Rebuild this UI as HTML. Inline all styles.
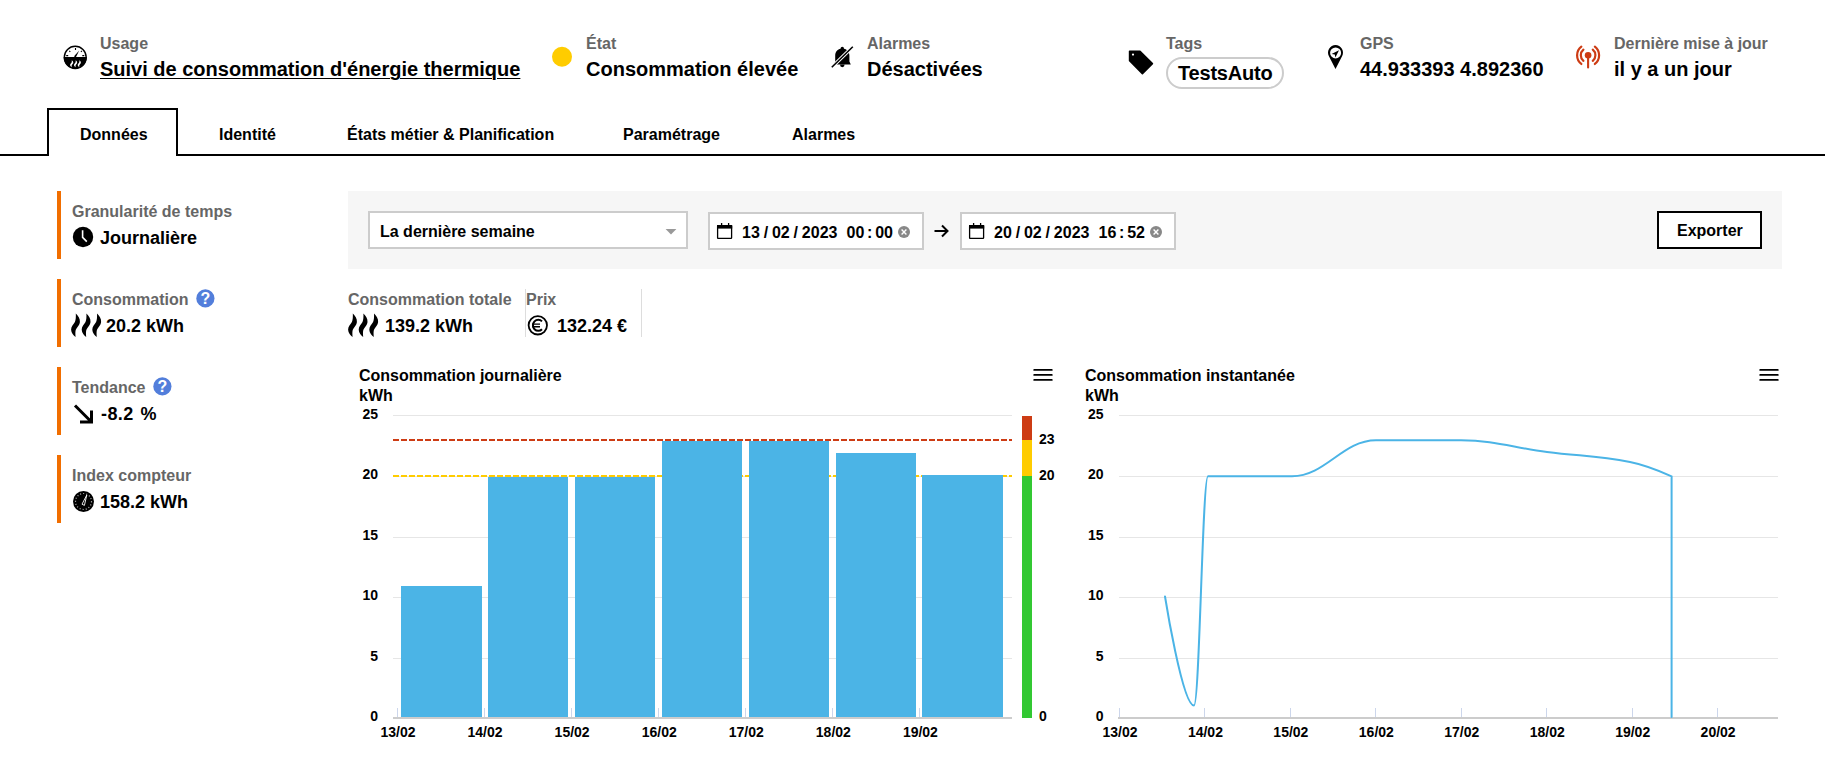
<!DOCTYPE html>
<html><head><meta charset="utf-8"><style>
html,body{margin:0;padding:0;background:#fff;width:1825px;height:768px;overflow:hidden;position:relative}
body{font-family:"Liberation Sans",sans-serif}
.t{position:absolute;white-space:nowrap;font-family:"Liberation Sans",sans-serif}
svg{overflow:visible}
</style></head><body>
<div class="t" style="left:100px;top:35.66px;font-size:16px;line-height:16px;color:#666;font-weight:700;">Usage</div>
<div class="t" style="left:100px;top:59.07px;font-size:20px;line-height:20px;color:#000;font-weight:700;text-decoration:underline;text-underline-offset:2px;text-decoration-thickness:1px;">Suivi de consommation d'énergie thermique</div>
<svg style="position:absolute;left:62px;top:44px" width="27" height="27" viewBox="0 0 27 27">
<circle cx="13.25" cy="13.1" r="10.9" fill="#fff" stroke="#000" stroke-width="1.4"/>
<path d="M2.35 13.6A10.9 10.9 0 0 0 24.15 13.6Z" fill="#000" stroke="#000" stroke-width="1.4"/>
<path d="M4.2 11.6h2M20.3 11.6h2M13.5 4.1v1.9M7.3 6.9l1 .9M19.9 6.9l-1 .9" stroke="#000" stroke-width="1.1"/>
<path d="M11.9 12.5L17.2 6.4L13.9 13.3Z" fill="#000"/>
<path transform="translate(7.70 16) scale(0.36 0.3)" d="M5.8 0.5C8 2.5 10.2 5.5 9.9 9C9.6 12.5 6.4 14.5 5.6 17.5C5.2 19.5 5.4 22 5.6 24C3.6 22.5 1.2 20 1.1 16.8C1 13.5 3.6 11.5 4.9 9C5.8 7 6 3.5 5.8 0.5Z" fill="#fff"/>
<path transform="translate(11.60 16) scale(0.36 0.3)" d="M5.8 0.5C8 2.5 10.2 5.5 9.9 9C9.6 12.5 6.4 14.5 5.6 17.5C5.2 19.5 5.4 22 5.6 24C3.6 22.5 1.2 20 1.1 16.8C1 13.5 3.6 11.5 4.9 9C5.8 7 6 3.5 5.8 0.5Z" fill="#fff"/>
<path transform="translate(15.30 16) scale(0.36 0.3)" d="M5.8 0.5C8 2.5 10.2 5.5 9.9 9C9.6 12.5 6.4 14.5 5.6 17.5C5.2 19.5 5.4 22 5.6 24C3.6 22.5 1.2 20 1.1 16.8C1 13.5 3.6 11.5 4.9 9C5.8 7 6 3.5 5.8 0.5Z" fill="#fff"/>
</svg>
<svg style="position:absolute;left:551px;top:46px" width="22" height="22" viewBox="0 0 22 22"><circle cx="11" cy="10.8" r="10" fill="#ffcc00"/></svg>
<div class="t" style="left:586px;top:35.66px;font-size:16px;line-height:16px;color:#666;font-weight:700;">État</div>
<div class="t" style="left:586px;top:59.07px;font-size:20px;line-height:20px;color:#000;font-weight:700;">Consommation élevée</div>
<svg style="position:absolute;left:829px;top:43px" width="28" height="28" viewBox="0 0 28 28">
<circle cx="13.3" cy="5.4" r="1.7" fill="#000"/>
<path d="M13.3 5.6C17.6 5.6 20.4 8.6 20.4 12.6V18.4L21.8 21.6H4.8L6.2 18.4V12.6C6.2 8.6 9 5.6 13.3 5.6Z" fill="#000"/>
<path d="M11 21.6a2.3 2.6 0 0 0 4.6 0z" fill="#000"/>
<path d="M2.8 24.3L23.8 3.8" stroke="#fff" stroke-width="3.4"/>
<path d="M2.8 24.3L23.8 3.8" stroke="#000" stroke-width="1.6"/>
</svg>
<div class="t" style="left:867px;top:35.66px;font-size:16px;line-height:16px;color:#666;font-weight:700;">Alarmes</div>
<div class="t" style="left:867px;top:59.07px;font-size:20px;line-height:20px;color:#000;font-weight:700;">Désactivées</div>
<svg style="position:absolute;left:1126px;top:47px" width="30" height="30" viewBox="0 0 30 30">
<path d="M3.6 4.2H14L26.4 16.6L16.4 26.6L3.6 13.8Z" fill="#000" stroke="#000" stroke-width="1.6" stroke-linejoin="round"/>
<circle cx="7" cy="7.6" r="1.1" fill="#fff"/>
</svg>
<div class="t" style="left:1166px;top:35.66px;font-size:16px;line-height:16px;color:#666;font-weight:700;">Tags</div>
<div style="position:absolute;left:1166px;top:57px;width:114px;height:28px;border:2px solid #ccc;border-radius:16px;background:#fff;"></div>
<div class="t" style="left:1178px;top:63.07px;font-size:20px;line-height:20px;color:#000;font-weight:700;letter-spacing:-0.2px;">TestsAuto</div>
<svg style="position:absolute;left:1324px;top:42px" width="24" height="30" viewBox="0 0 24 30">
<path d="M11.5 27.1L4.82 14.01A7.5 7.5 0 1 1 18.18 14.01Z" fill="#000"/>
<circle cx="11.6" cy="10.9" r="5.5" fill="#fff"/>
<path d="M7.6 12.1L15 8.2L11.4 15.4L10.8 12.6Z" fill="#000"/>
</svg>
<div class="t" style="left:1360px;top:35.66px;font-size:16px;line-height:16px;color:#666;font-weight:700;">GPS</div>
<div class="t" style="left:1360px;top:59.07px;font-size:20px;line-height:20px;color:#000;font-weight:700;">44.933393 4.892360</div>
<svg style="position:absolute;left:1572px;top:42px" width="32" height="30" viewBox="0 0 32 30">
<circle cx="16.1" cy="13.3" r="3.3" fill="#cd3c14"/>
<path d="M16.1 14v11.5" stroke="#cd3c14" stroke-width="2.1" stroke-linecap="round"/>
<path d="M11.41 7.71A7.3 7.3 0 0 0 11.41 18.89M20.79 7.71A7.3 7.3 0 0 1 20.79 18.89" stroke="#cd3c14" stroke-width="2.2" fill="none" stroke-linecap="round"/>
<path d="M9.33 4.63A11 11 0 0 0 9.33 21.97M22.87 4.63A11 11 0 0 1 22.87 21.97" stroke="#cd3c14" stroke-width="2.2" fill="none" stroke-linecap="round"/>
</svg>
<div class="t" style="left:1614px;top:35.66px;font-size:16px;line-height:16px;color:#666;font-weight:700;">Dernière mise à jour</div>
<div class="t" style="left:1614px;top:59.07px;font-size:20px;line-height:20px;color:#000;font-weight:700;">il y a un jour</div>
<div style="position:absolute;left:0px;top:154px;width:1825px;height:2px;background:#000;"></div>
<div style="position:absolute;left:47px;top:108px;width:127px;height:46px;border:2px solid #000;border-bottom:none;background:#fff;"></div>
<div class="t" style="left:80px;top:126.76px;font-size:16px;line-height:16px;color:#000;font-weight:700;">Données</div>
<div class="t" style="left:219px;top:126.76px;font-size:16px;line-height:16px;color:#000;font-weight:700;">Identité</div>
<div class="t" style="left:347px;top:126.76px;font-size:16px;line-height:16px;color:#000;font-weight:700;">États métier &amp; Planification</div>
<div class="t" style="left:623px;top:126.76px;font-size:16px;line-height:16px;color:#000;font-weight:700;">Paramétrage</div>
<div class="t" style="left:792px;top:126.76px;font-size:16px;line-height:16px;color:#000;font-weight:700;">Alarmes</div>
<div style="position:absolute;left:57px;top:191px;width:4px;height:68px;background:#f16e00;"></div>
<div class="t" style="left:72px;top:203.66px;font-size:16px;line-height:16px;color:#666;font-weight:700;">Granularité de temps</div>
<svg style="position:absolute;left:72.3px;top:226.3px" width="22" height="22" viewBox="0 0 22 22"><circle cx="11" cy="11" r="10.2" fill="#000"/><path d="M10.6 4.3V11.4L14.8 15.6" stroke="#fff" stroke-width="1.6" fill="none"/></svg>
<div class="t" style="left:100px;top:228.76px;font-size:18px;line-height:18px;color:#000;font-weight:700;">Journalière</div>
<div style="position:absolute;left:57px;top:279px;width:4px;height:68px;background:#f16e00;"></div>
<div class="t" style="left:72px;top:291.66px;font-size:16px;line-height:16px;color:#666;font-weight:700;">Consommation</div>
<svg style="position:absolute;left:195px;top:288px" width="20" height="20" viewBox="0 0 20 20"><circle cx="10.4" cy="10.4" r="9.1" fill="#527edb"/><text x="10.4" y="16" font-family="Liberation Sans" font-weight="700" font-size="16" fill="#fff" text-anchor="middle">?</text></svg>

<div class="t" style="left:106px;top:316.76px;font-size:18px;line-height:18px;color:#000;font-weight:700;">20.2 kWh</div>
<div style="position:absolute;left:57px;top:367px;width:4px;height:68px;background:#f16e00;"></div>
<div class="t" style="left:72px;top:379.66px;font-size:16px;line-height:16px;color:#666;font-weight:700;">Tendance</div>
<svg style="position:absolute;left:152px;top:376px" width="20" height="20" viewBox="0 0 20 20"><circle cx="10.4" cy="10.4" r="9.1" fill="#527edb"/><text x="10.4" y="16" font-family="Liberation Sans" font-weight="700" font-size="16" fill="#fff" text-anchor="middle">?</text></svg>
<svg style="position:absolute;left:72px;top:402px" width="24" height="24" viewBox="0 0 24 24"><path d="M3 3.5L19 19.5M19.5 8.5V20H8" stroke="#000" stroke-width="3" fill="none"/></svg>
<div class="t" style="left:101px;top:404.76px;font-size:18px;line-height:18px;color:#000;font-weight:700;"><span style="word-spacing:1.5px;letter-spacing:0.4px">-8.2 %</span></div>
<div style="position:absolute;left:57px;top:455px;width:4px;height:68px;background:#f16e00;"></div>
<div class="t" style="left:72px;top:467.66px;font-size:16px;line-height:16px;color:#666;font-weight:700;">Index compteur</div>
<svg style="position:absolute;left:72px;top:490px" width="23" height="23" viewBox="0 0 23 23"><circle cx="11.5" cy="11.5" r="10.5" fill="#000"/><circle cx="11.5" cy="11.5" r="8" fill="none" stroke="#fff" stroke-width="1.2" stroke-dasharray="0.9 2.2" opacity=".8"/><path d="M10 14.2 L14.8 5 L12.4 15.4 Z" fill="none" stroke="#fff" stroke-width=".9"/></svg>
<div class="t" style="left:100px;top:492.76px;font-size:18px;line-height:18px;color:#000;font-weight:700;">158.2 kWh</div>
<svg style="position:absolute;left:70px;top:313px" width="34" height="25" viewBox="0 0 34 25"><path transform="translate(0.00 0)" d="M5.8 0.5C8 2.5 10.2 5.5 9.9 9C9.6 12.5 6.4 14.5 5.6 17.5C5.2 19.5 5.4 22 5.6 24C3.6 22.5 1.2 20 1.1 16.8C1 13.5 3.6 11.5 4.9 9C5.8 7 6 3.5 5.8 0.5Z" fill="#000"/><path transform="translate(10.60 0)" d="M5.8 0.5C8 2.5 10.2 5.5 9.9 9C9.6 12.5 6.4 14.5 5.6 17.5C5.2 19.5 5.4 22 5.6 24C3.6 22.5 1.2 20 1.1 16.8C1 13.5 3.6 11.5 4.9 9C5.8 7 6 3.5 5.8 0.5Z" fill="#000"/><path transform="translate(21.20 0)" d="M5.8 0.5C8 2.5 10.2 5.5 9.9 9C9.6 12.5 6.4 14.5 5.6 17.5C5.2 19.5 5.4 22 5.6 24C3.6 22.5 1.2 20 1.1 16.8C1 13.5 3.6 11.5 4.9 9C5.8 7 6 3.5 5.8 0.5Z" fill="#000"/></svg>
<div style="position:absolute;left:348px;top:191px;width:1434px;height:78px;background:#f6f6f6;"></div>
<div style="position:absolute;left:368px;top:211px;width:316px;height:34px;border:2px solid #ccc;background:#fff;"></div>
<div class="t" style="left:380px;top:223.76px;font-size:16px;line-height:16px;color:#000;font-weight:700;">La dernière semaine</div>
<svg style="position:absolute;left:665px;top:228px" width="12" height="8" viewBox="0 0 12 8"><path d="M.6 1h10.8L6 6.6z" fill="#999"/></svg>
<div style="position:absolute;left:708px;top:212px;width:212px;height:34px;border:2px solid #ccc;background:#fff;"></div>
<svg style="position:absolute;left:716px;top:222px" width="18" height="18" viewBox="0 0 18 18"><rect x="1.6" y="3.6" width="14" height="12.8" rx=".6" fill="none" stroke="#000" stroke-width="1.3"/><rect x="1" y="3" width="15.2" height="3.6" fill="#000"/><path d="M5.6 1v4M12.6 1v4" stroke="#000" stroke-width="1.3"/></svg>
<div class="t" style="left:742px;top:224.76px;font-size:16px;line-height:16px;color:#000;font-weight:700;word-spacing:-0.6px;">13 / 02 / 2023</div>
<div class="t" style="left:846.5px;top:224.76px;font-size:16px;line-height:16px;color:#000;font-weight:700;word-spacing:-1.65px;">00 : 00</div>
<svg style="position:absolute;left:897px;top:225px" width="14" height="14" viewBox="0 0 14 14"><circle cx="7" cy="7" r="6" fill="#888"/><path d="M4.6 4.6l4.8 4.8M9.4 4.6l-4.8 4.8" stroke="#fff" stroke-width="1.4"/></svg>
<svg style="position:absolute;left:932px;top:223px" width="20" height="16" viewBox="0 0 20 16"><path d="M2.5 8h13M10 2.5L15.5 8L10 13.5" stroke="#000" stroke-width="2" fill="none"/></svg>
<div style="position:absolute;left:960px;top:212px;width:212px;height:34px;border:2px solid #ccc;background:#fff;"></div>
<svg style="position:absolute;left:968px;top:222px" width="18" height="18" viewBox="0 0 18 18"><rect x="1.6" y="3.6" width="14" height="12.8" rx=".6" fill="none" stroke="#000" stroke-width="1.3"/><rect x="1" y="3" width="15.2" height="3.6" fill="#000"/><path d="M5.6 1v4M12.6 1v4" stroke="#000" stroke-width="1.3"/></svg>
<div class="t" style="left:994px;top:224.76px;font-size:16px;line-height:16px;color:#000;font-weight:700;word-spacing:-0.6px;">20 / 02 / 2023</div>
<div class="t" style="left:1098.5px;top:224.76px;font-size:16px;line-height:16px;color:#000;font-weight:700;word-spacing:-1.65px;">16 : 52</div>
<svg style="position:absolute;left:1149px;top:225px" width="14" height="14" viewBox="0 0 14 14"><circle cx="7" cy="7" r="6" fill="#888"/><path d="M4.6 4.6l4.8 4.8M9.4 4.6l-4.8 4.8" stroke="#fff" stroke-width="1.4"/></svg>
<div style="position:absolute;left:1657px;top:211px;width:101px;height:34px;border:2px solid #000;background:#fff;"></div>
<div class="t" style="left:1677px;top:223.46px;font-size:16px;line-height:16px;color:#000;font-weight:700;">Exporter</div>
<div class="t" style="left:348px;top:291.76px;font-size:16px;line-height:16px;color:#666;font-weight:700;">Consommation totale</div>
<svg style="position:absolute;left:347px;top:313px" width="34" height="25" viewBox="0 0 34 25"><path transform="translate(0.00 0)" d="M5.8 0.5C8 2.5 10.2 5.5 9.9 9C9.6 12.5 6.4 14.5 5.6 17.5C5.2 19.5 5.4 22 5.6 24C3.6 22.5 1.2 20 1.1 16.8C1 13.5 3.6 11.5 4.9 9C5.8 7 6 3.5 5.8 0.5Z" fill="#000"/><path transform="translate(10.60 0)" d="M5.8 0.5C8 2.5 10.2 5.5 9.9 9C9.6 12.5 6.4 14.5 5.6 17.5C5.2 19.5 5.4 22 5.6 24C3.6 22.5 1.2 20 1.1 16.8C1 13.5 3.6 11.5 4.9 9C5.8 7 6 3.5 5.8 0.5Z" fill="#000"/><path transform="translate(21.20 0)" d="M5.8 0.5C8 2.5 10.2 5.5 9.9 9C9.6 12.5 6.4 14.5 5.6 17.5C5.2 19.5 5.4 22 5.6 24C3.6 22.5 1.2 20 1.1 16.8C1 13.5 3.6 11.5 4.9 9C5.8 7 6 3.5 5.8 0.5Z" fill="#000"/></svg>
<div class="t" style="left:385px;top:316.76px;font-size:18px;line-height:18px;color:#000;font-weight:700;">139.2 kWh</div>
<div style="position:absolute;left:525px;top:289px;width:1px;height:48px;background:#ddd;"></div>
<div class="t" style="left:526px;top:291.76px;font-size:16px;line-height:16px;color:#666;font-weight:700;">Prix</div>
<svg style="position:absolute;left:526px;top:314px" width="24" height="24" viewBox="0 0 24 24"><circle cx="11.8" cy="11.3" r="9.2" fill="none" stroke="#000" stroke-width="1.8"/><path d="M16 7.4A5.3 5.5 0 1 0 16 15.2" fill="none" stroke="#000" stroke-width="2"/><path d="M6.2 10.1H14M6.2 12.8H14" stroke="#000" stroke-width="1.4"/></svg>
<div class="t" style="left:557px;top:316.76px;font-size:18px;line-height:18px;color:#000;font-weight:700;">132.24 €</div>
<div style="position:absolute;left:641px;top:289px;width:1px;height:48px;background:#ddd;"></div>
<div class="t" style="left:359px;top:367.96px;font-size:16px;line-height:16px;color:#000;font-weight:700;">Consommation journalière</div>
<div class="t" style="left:359px;top:387.96px;font-size:16px;line-height:16px;color:#000;font-weight:700;">kWh</div>
<svg style="position:absolute;left:1033px;top:368px" width="20" height="14" viewBox="0 0 20 14"><path d="M1.2 1.9h17.6M1.2 6.95h17.6M1.2 11.9h17.6" stroke="#000" stroke-width="1.8" stroke-linecap="round"/></svg>
<svg style="position:absolute;left:0;top:0" width="1825" height="768"><rect x="393" y="415" width="619" height="1" fill="#e6e6e6"/><rect x="393" y="476" width="619" height="1" fill="#e6e6e6"/><rect x="393" y="537" width="619" height="1" fill="#e6e6e6"/><rect x="393" y="597" width="619" height="1" fill="#e6e6e6"/><rect x="393" y="658" width="619" height="1" fill="#e6e6e6"/></svg>
<div class="t" style="left:338px;width:40px;text-align:right;top:407.05px;font-size:14px;line-height:14px;font-weight:700">25</div>
<div class="t" style="left:338px;width:40px;text-align:right;top:467.45px;font-size:14px;line-height:14px;font-weight:700">20</div>
<div class="t" style="left:338px;width:40px;text-align:right;top:527.85px;font-size:14px;line-height:14px;font-weight:700">15</div>
<div class="t" style="left:338px;width:40px;text-align:right;top:588.25px;font-size:14px;line-height:14px;font-weight:700">10</div>
<div class="t" style="left:338px;width:40px;text-align:right;top:648.65px;font-size:14px;line-height:14px;font-weight:700">5</div>
<div class="t" style="left:338px;width:40px;text-align:right;top:709.05px;font-size:14px;line-height:14px;font-weight:700">0</div>
<div class="t" style="left:368.0px;width:60px;text-align:center;top:725.15px;font-size:14px;line-height:14px;font-weight:700">13/02</div>
<div class="t" style="left:455.07px;width:60px;text-align:center;top:725.15px;font-size:14px;line-height:14px;font-weight:700">14/02</div>
<div class="t" style="left:542.14px;width:60px;text-align:center;top:725.15px;font-size:14px;line-height:14px;font-weight:700">15/02</div>
<div class="t" style="left:629.21px;width:60px;text-align:center;top:725.15px;font-size:14px;line-height:14px;font-weight:700">16/02</div>
<div class="t" style="left:716.28px;width:60px;text-align:center;top:725.15px;font-size:14px;line-height:14px;font-weight:700">17/02</div>
<div class="t" style="left:803.3499999999999px;width:60px;text-align:center;top:725.15px;font-size:14px;line-height:14px;font-weight:700">18/02</div>
<div class="t" style="left:890.42px;width:60px;text-align:center;top:725.15px;font-size:14px;line-height:14px;font-weight:700">19/02</div>
<svg style="position:absolute;left:0;top:0" width="1825" height="768"><path d="M393 440H1012" stroke="#cd3c14" stroke-width="2" stroke-dasharray="6 2"/><path d="M393 476H1012" stroke="#ffcc00" stroke-width="2" stroke-dasharray="6 2"/><rect x="401" y="586" width="81" height="131" fill="#4bb4e6"/><rect x="488" y="477" width="80" height="240" fill="#4bb4e6"/><rect x="575" y="477" width="80" height="240" fill="#4bb4e6"/><rect x="662" y="441" width="80" height="276" fill="#4bb4e6"/><rect x="749" y="441" width="80" height="276" fill="#4bb4e6"/><rect x="836" y="453" width="80" height="264" fill="#4bb4e6"/><rect x="922" y="475" width="81" height="242" fill="#4bb4e6"/><rect x="397" y="708" width="1" height="9" fill="#ccd6eb"/><rect x="484" y="708" width="1" height="9" fill="#ccd6eb"/><rect x="571" y="708" width="1" height="9" fill="#ccd6eb"/><rect x="658" y="708" width="1" height="9" fill="#ccd6eb"/><rect x="745" y="708" width="1" height="9" fill="#ccd6eb"/><rect x="832" y="708" width="1" height="9" fill="#ccd6eb"/><rect x="919" y="708" width="1" height="9" fill="#ccd6eb"/><rect x="393" y="717" width="619" height="2" fill="#ccc"/><rect x="1022" y="416" width="10" height="24" fill="#cd3c14"/><rect x="1022" y="440" width="10" height="36" fill="#ffcc00"/><rect x="1022" y="476" width="10" height="242" fill="#32c832"/></svg>
<div class="t" style="left:1039px;top:432.45px;font-size:14px;line-height:14px;color:#000;font-weight:700;">23</div>
<div class="t" style="left:1039px;top:467.95px;font-size:14px;line-height:14px;color:#000;font-weight:700;">20</div>
<div class="t" style="left:1039px;top:708.75px;font-size:14px;line-height:14px;color:#000;font-weight:700;">0</div>
<div class="t" style="left:1085px;top:367.96px;font-size:16px;line-height:16px;color:#000;font-weight:700;">Consommation instantanée</div>
<div class="t" style="left:1085px;top:387.96px;font-size:16px;line-height:16px;color:#000;font-weight:700;">kWh</div>
<svg style="position:absolute;left:1759px;top:368px" width="20" height="14" viewBox="0 0 20 14"><path d="M1.2 1.9h17.6M1.2 6.95h17.6M1.2 11.9h17.6" stroke="#000" stroke-width="1.8" stroke-linecap="round"/></svg>
<svg style="position:absolute;left:0;top:0" width="1825" height="768"><rect x="1119" y="415" width="659" height="1" fill="#e6e6e6"/><rect x="1119" y="476" width="659" height="1" fill="#e6e6e6"/><rect x="1119" y="537" width="659" height="1" fill="#e6e6e6"/><rect x="1119" y="597" width="659" height="1" fill="#e6e6e6"/><rect x="1119" y="658" width="659" height="1" fill="#e6e6e6"/></svg>
<div class="t" style="left:1063.5px;width:40px;text-align:right;top:407.05px;font-size:14px;line-height:14px;font-weight:700">25</div>
<div class="t" style="left:1063.5px;width:40px;text-align:right;top:467.45px;font-size:14px;line-height:14px;font-weight:700">20</div>
<div class="t" style="left:1063.5px;width:40px;text-align:right;top:527.85px;font-size:14px;line-height:14px;font-weight:700">15</div>
<div class="t" style="left:1063.5px;width:40px;text-align:right;top:588.25px;font-size:14px;line-height:14px;font-weight:700">10</div>
<div class="t" style="left:1063.5px;width:40px;text-align:right;top:648.65px;font-size:14px;line-height:14px;font-weight:700">5</div>
<div class="t" style="left:1063.5px;width:40px;text-align:right;top:709.05px;font-size:14px;line-height:14px;font-weight:700">0</div>
<div class="t" style="left:1090.0px;width:60px;text-align:center;top:725.15px;font-size:14px;line-height:14px;font-weight:700">13/02</div>
<div class="t" style="left:1175.45px;width:60px;text-align:center;top:725.15px;font-size:14px;line-height:14px;font-weight:700">14/02</div>
<div class="t" style="left:1260.9px;width:60px;text-align:center;top:725.15px;font-size:14px;line-height:14px;font-weight:700">15/02</div>
<div class="t" style="left:1346.35px;width:60px;text-align:center;top:725.15px;font-size:14px;line-height:14px;font-weight:700">16/02</div>
<div class="t" style="left:1431.8px;width:60px;text-align:center;top:725.15px;font-size:14px;line-height:14px;font-weight:700">17/02</div>
<div class="t" style="left:1517.25px;width:60px;text-align:center;top:725.15px;font-size:14px;line-height:14px;font-weight:700">18/02</div>
<div class="t" style="left:1602.7px;width:60px;text-align:center;top:725.15px;font-size:14px;line-height:14px;font-weight:700">19/02</div>
<div class="t" style="left:1688.15px;width:60px;text-align:center;top:725.15px;font-size:14px;line-height:14px;font-weight:700">20/02</div>
<svg style="position:absolute;left:0;top:0" width="1825" height="768"><rect x="1119" y="708" width="1" height="9" fill="#ccd6eb"/><rect x="1204" y="708" width="1" height="9" fill="#ccd6eb"/><rect x="1290" y="708" width="1" height="9" fill="#ccd6eb"/><rect x="1375" y="708" width="1" height="9" fill="#ccd6eb"/><rect x="1461" y="708" width="1" height="9" fill="#ccd6eb"/><rect x="1546" y="708" width="1" height="9" fill="#ccd6eb"/><rect x="1632" y="708" width="1" height="9" fill="#ccd6eb"/><rect x="1717" y="708" width="1" height="9" fill="#ccd6eb"/><rect x="1118" y="717" width="660" height="2" fill="#ccc"/><path d="M1165.00 596.50 C1165.00 596.50 1182.40 705.50 1194.00 705.50 C1199.60 705.50 1202.40 476.30 1208.00 476.30 C1241.60 476.30 1258.40 476.30 1292.00 476.30 C1325.60 476.30 1342.40 440.30 1376.00 440.30 C1410.00 440.30 1427.00 440.30 1461.00 440.30 C1495.40 440.30 1512.60 447.58 1547.00 452.00 C1580.20 456.26 1596.80 455.53 1630.00 462.00 C1646.64 465.25 1671.60 476.30 1671.60 476.30 L1671.6 717" fill="none" stroke="#4bb4e6" stroke-width="2" stroke-linejoin="round" stroke-linecap="round"/></svg>
</body></html>
